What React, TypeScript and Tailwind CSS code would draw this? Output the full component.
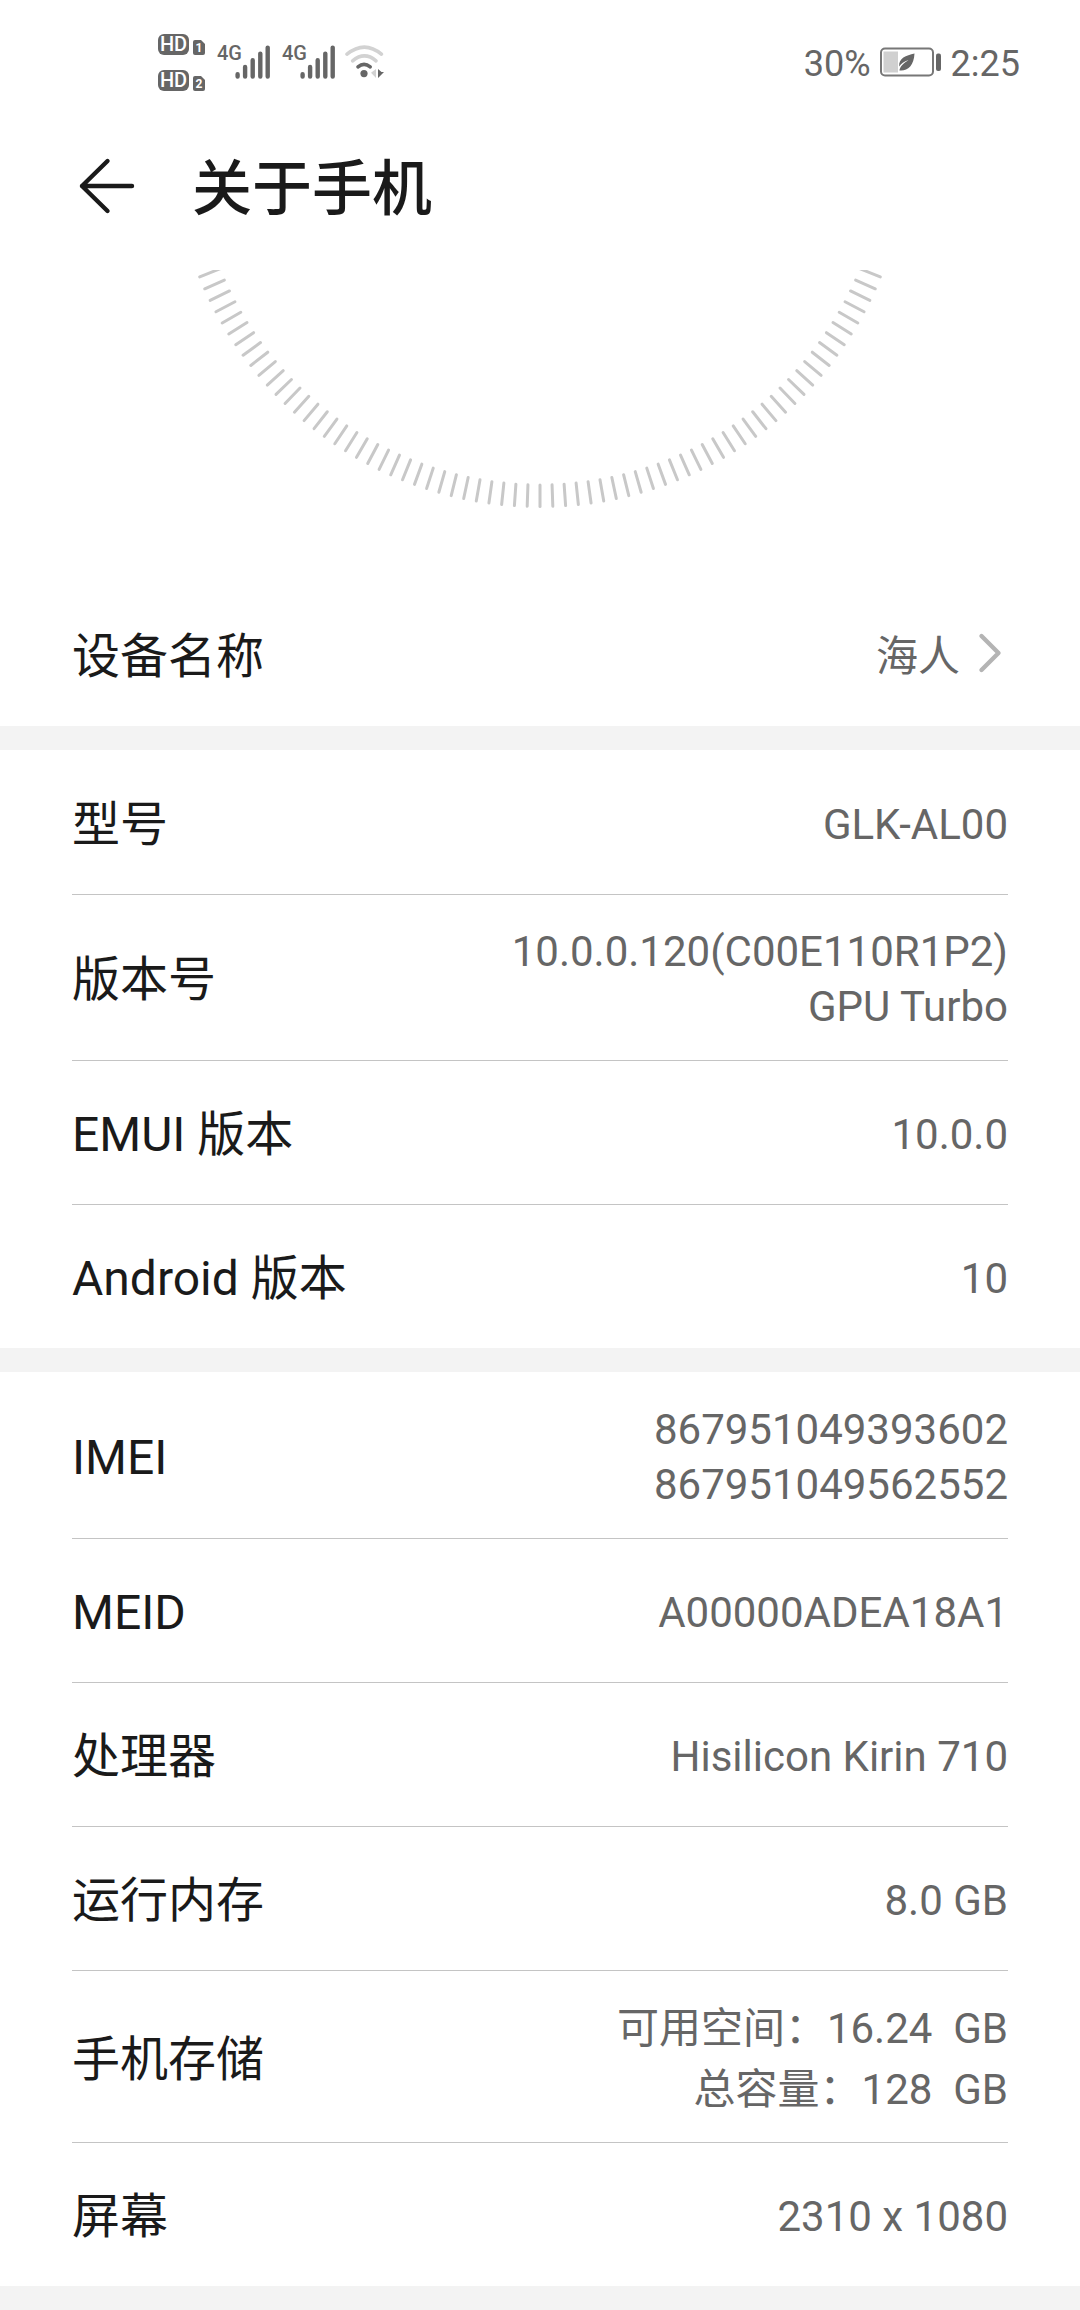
import type { ReactNode } from 'react'

type InfoItem = {
  label: string
  lines: string[]
  tall?: boolean
}

const versionInfo: InfoItem[] = [
  { label: '型号', lines: ['GLK-AL00'] },
  { label: '版本号', lines: ['10.0.0.120(C00E110R1P2)', 'GPU Turbo'] },
  { label: 'EMUI 版本', lines: ['10.0.0'] },
  { label: 'Android 版本', lines: ['10'] },
]

const hardwareInfo: InfoItem[] = [
  { label: 'IMEI', lines: ['867951049393602', '867951049562552'] },
  { label: 'MEID', lines: ['A00000ADEA18A1'] },
  { label: '处理器', lines: ['Hisilicon Kirin 710'] },
  { label: '运行内存', lines: ['8.0 GB'] },
  { label: '手机存储', lines: ['可用空间：16.24  GB', '总容量：128  GB'], tall: true },
  { label: '屏幕', lines: ['2310 x 1080'] },
]

const HdBadge = ({ sim }: { sim: string }) => (
  <div className="flex items-end gap-1">
    <span className="flex h-[21px] w-[31px] items-center justify-center rounded-md bg-[#666666] text-[20px] leading-none font-medium text-white">
      HD
    </span>
    <svg width="12" height="15" viewBox="0 0 12 15">
      <path d="M2 0h6l4 4v9a2 2 0 0 1-2 2H2a2 2 0 0 1-2-2V2a2 2 0 0 1 2-2z" fill="#666666" />
      <text x="6" y="12" textAnchor="middle" fontSize="12" fontWeight="700" fill="#fff">
        {sim}
      </text>
    </svg>
  </div>
)

const Signal = () => (
  <div className="flex h-[34px] items-start">
    <span className="w-[18px] text-[20px] leading-4 font-medium">4G</span>
    <svg width="35" height="34" viewBox="0 0 35 34" fill="none" stroke="#666666" strokeWidth="4.4" strokeLinecap="round">
      <path d="M2.6 29.2v2.4M10.1 22v9.6M17.7 15.2v16.4M25.3 8.6v23M32.7 2.6v29" />
    </svg>
  </div>
)

const Wifi = () => (
  <svg width="39" height="34" viewBox="0 0 39 34" fill="none" strokeLinecap="round" strokeWidth="3.6">
    <path d="M2 9.2Q19.5-5 36.4 9.2" stroke="#d2d2d2" />
    <path d="M7.6 15.8Q19.5 6 31 15.8" stroke="#d2d2d2" />
    <path d="M13 21.8Q19 16.8 25.2 21.8" stroke="#666666" />
    <circle cx="19" cy="28.6" r="3.6" fill="#666666" />
    <path d="M31 24v9l-5-5.2z" fill="#d2d2d2" />
    <path d="M33 24v9l6-6h-2.5z" fill="#666666" />
  </svg>
)

const Battery = () => (
  <svg width="62" height="30" viewBox="0 0 62 30">
    <rect x="1" y="1.5" width="52" height="27" rx="4" fill="none" stroke="#777777" strokeWidth="2" />
    <rect x="3.5" y="4.5" width="14.5" height="21" fill="#d0d0d0" />
    <path d="M34.5 6.5C26 8.5 18.5 11 19.2 19.5 21 16.5 24 14.5 28.5 13 24 16 20 19 19.4 23.5 27 24.5 34 19 34.5 6.5z" fill="#666666" />
    <rect x="56" y="6.5" width="5" height="17.5" rx="2" fill="#666666" />
  </svg>
)

const StatusBar = () => (
  <div className="flex h-[124px] items-center justify-between pr-[60px] pl-[158px] text-[#666666]">
    <div className="flex items-center">
      <div className="flex flex-col gap-[15px]">
        <HdBadge sim="1" />
        <HdBadge sim="2" />
      </div>
      <div className="ml-3 flex gap-3">
        <Signal />
        <Signal />
      </div>
      <div className="ml-2.5">
        <Wifi />
      </div>
    </div>
    <div className="flex items-center gap-[9px] text-[36px] leading-none">
      <span className="pt-[3px]">30%</span>
      <Battery />
      <span className="pt-[3px]">2:25</span>
    </div>
  </div>
)

const Dial = () => (
  <svg className="mt-5 h-[312px] w-full" viewBox="0 0 1080 312" preserveAspectRatio="xMidYMin slice">
    <g stroke="#c8c8c8" strokeWidth="3" strokeLinecap="round">
      {Array.from({ length: 75 }, (_, i) => (
        <line key={i} x1="540" y1="215" x2="540" y2="236.5" transform={`rotate(${(i - 37) * 2} 540 -130.5)`} />
      ))}
    </g>
  </svg>
)

const Section = ({ children }: { children: ReactNode }) => (
  <dl className="border-b-[24px] border-[#f3f3f3] px-18">{children}</dl>
)

const InfoRow = ({ label, lines, tall }: InfoItem) => (
  <div
    className={
      tall
        ? 'flex min-h-36 items-center justify-between border-t border-[#c4c4c4] pt-[27px] pb-[22px]'
        : 'flex min-h-36 items-center justify-between border-t border-[#c4c4c4] pt-[29px] pb-[26px] first:border-t-0 first:pt-[30px]'
    }
  >
    <dt className="pt-0.5 text-[48px] leading-[56px] text-[#1a1a1a]">{label}</dt>
    <dd
      className={
        tall
          ? 'text-right text-[42px] leading-[61px] whitespace-pre text-[#666666]'
          : 'text-right text-[42px] leading-[55px] whitespace-pre text-[#666666]'
      }
    >
      {lines.map((line) => (
        <div key={line}>{line}</div>
      ))}
    </dd>
  </div>
)

const App = () => {
  return (
    <div className="min-h-screen bg-white font-['Roboto','Noto_Sans_CJK_SC',sans-serif]">
      <StatusBar />

      <header className="flex h-[126px] items-center gap-14 pl-19">
        <button type="button" aria-label="返回">
          <svg width="60" height="60" viewBox="0 0 60 60" fill="none" stroke="#1a1a1a" strokeWidth="4.4" strokeLinecap="round" strokeLinejoin="round">
            <path d="M31.5 4L6 29l25.5 25M6 29h50" />
          </svg>
        </button>
        <h1 className="pt-1.5 text-[60px] leading-[72px] font-medium text-[#1a1a1a]">关于手机</h1>
      </header>

      <main>
        <Dial />

        <button
          type="button"
          className="flex h-[168px] w-full items-center justify-between border-b-[24px] border-[#f3f3f3] px-18 pt-1 text-left"
        >
          <span className="pt-0.5 text-[48px] leading-[56px] text-[#1a1a1a]">设备名称</span>
          <span className="flex items-center gap-[18px] text-[42px] leading-[55px] text-[#666666]">
            海人
            <svg width="30" height="48" viewBox="0 0 30 48" fill="none" stroke="#b4b4b4" strokeWidth="4.4" strokeLinecap="round" strokeLinejoin="round">
              <path d="M3.5 4l17 17-17 17" />
            </svg>
          </span>
        </button>

        <Section>
          {versionInfo.map((item) => (
            <InfoRow key={item.label} {...item} />
          ))}
        </Section>

        <Section>
          {hardwareInfo.map((item) => (
            <InfoRow key={item.label} {...item} />
          ))}
        </Section>
      </main>
    </div>
  )
}

export default App
